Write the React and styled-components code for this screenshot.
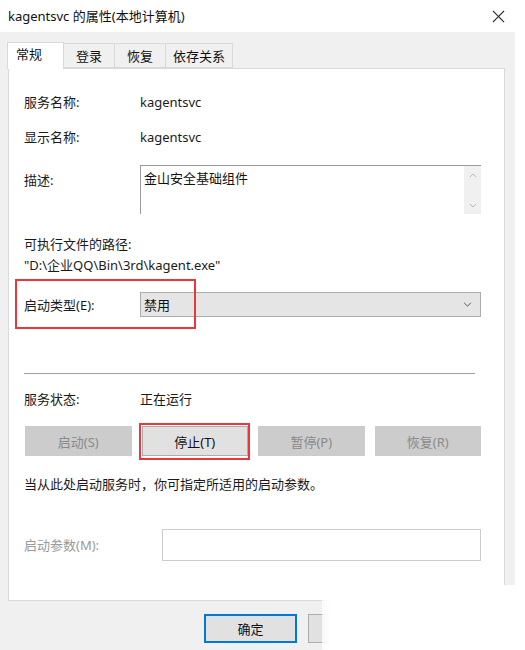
import styled, { createGlobalStyle } from "styled-components";

const GlobalStyle = createGlobalStyle`
  html, body {
    margin: 0;
    padding: 0;
    background: #ffffff;
  }
  body {
    font-family: "Noto Sans", "Noto Sans CJK SC", sans-serif;
    font-size: 13px;
    color: #1a1a1a;
  }
`;

const FONT = `"Noto Sans", "Noto Sans CJK SC", sans-serif`;

export default function App() {
  const actions = [
    { label: "启动(S)", enabled: false },
    { label: "停止(T)", enabled: true, marked: true },
    { label: "暂停(P)", enabled: false },
    { label: "恢复(R)", enabled: false },
  ];

  return (
    <Window>
      <GlobalStyle />
      <TitleBar>
        <TitleText>kagentsvc 的属性(本地计算机)</TitleText>
        <CloseIcon width="13" height="13" viewBox="0 0 14 14">
          <line x1="1" y1="1" x2="13" y2="13" />
          <line x1="13" y1="1" x2="1" y2="13" />
        </CloseIcon>
      </TitleBar>

      <Body>
        <TabRow>
          <Tab $active>常规</Tab>
          <Tab>登录</Tab>
          <Tab>恢复</Tab>
          <Tab>依存关系</Tab>
        </TabRow>

        <Panel>
          <InfoRow>
            <Label>服务名称:</Label>
            <Value>kagentsvc</Value>
          </InfoRow>
          <InfoRow $gap={15}>
            <Label>显示名称:</Label>
            <Value>kagentsvc</Value>
          </InfoRow>

          <DescRow>
            <Label $pad={5}>描述:</Label>
            <DescBox>
              <DescText>金山安全基础组件</DescText>
              <ScrollBar>
                <Arrow viewBox="0 0 10 6">
                  <polyline points="1,5 5,1 9,5" />
                </Arrow>
                <Arrow viewBox="0 0 10 6">
                  <polyline points="1,1 5,5 9,1" />
                </Arrow>
              </ScrollBar>
            </DescBox>
          </DescRow>

          <TextLine $gap={20}>可执行文件的路径:</TextLine>
          <TextLine $gap={1}>"D:\企业QQ\Bin\3rd\kagent.exe"</TextLine>

          <StartupRow>
            <MarkBox />
            <Label>启动类型(E):</Label>
            <Select>
              <span>禁用</span>
              <Chevron viewBox="0 0 10 6">
                <polyline points="1,1 5,5 9,1" />
              </Chevron>
            </Select>
          </StartupRow>

          <Separator />

          <InfoRow $gap={14}>
            <Label>服务状态:</Label>
            <Value>正在运行</Value>
          </InfoRow>

          <ButtonGrid>
            {actions.map((a) => (
              <ActionWrap key={a.label}>
                <ActionButton $enabled={a.enabled}>{a.label}</ActionButton>
                {a.marked && <ButtonMark />}
              </ActionWrap>
            ))}
          </ButtonGrid>

          <TextLine $gap={18}>当从此处启动服务时，你可指定所适用的启动参数。</TextLine>

          <ParamRow>
            <ParamLabel>启动参数(M):</ParamLabel>
            <ParamInput />
          </ParamRow>
        </Panel>

        <Footer>
          <DialogButton $primary>确定</DialogButton>
          <DialogButton>取消</DialogButton>
          <DialogButton>应用(A)</DialogButton>
        </Footer>
        <Watermark />
      </Body>
    </Window>
  );
}

const Window = styled.div`
  width: 525px;
  height: 650px;
  background: #ffffff;
  display: flex;
  flex-direction: column;
  overflow: hidden;
  font-family: ${FONT};
`;

const TitleBar = styled.div`
  height: 32px;
  display: flex;
  align-items: center;
  justify-content: space-between;
  padding: 0 20px 0 8px;
  box-sizing: border-box;
`;

const TitleText = styled.div`
  font-size: 13px;
  line-height: 18px;
  color: #111;
`;

const CloseIcon = styled.svg`
  display: block;
  width: 13px;
  height: 13px;
  flex: 0 0 13px;
  stroke: #222;
  stroke-width: 1.2;
  fill: none;
`;

const Body = styled.div`
  position: relative;
  width: 515px;
  flex: 1;
  background: #f0f0f0;
  padding: 10px 10px 0 8px;
  box-sizing: border-box;
`;

const TabRow = styled.div`
  display: flex;
  align-items: flex-end;
  height: 26px;
  margin-left: -1px;
`;

const Tab = styled.div`
  box-sizing: border-box;
  height: ${({ $active }) => ($active ? "27px" : "25px")};
  margin-bottom: ${({ $active }) => ($active ? "-1px" : "0")};
  padding: 0 ${({ $active }) => ($active ? "13px 0 8px" : "7px")};
  width: ${({ $active }) => ($active ? "57px" : "auto")};
  background: ${({ $active }) => ($active ? "#ffffff" : "#f0f0f0")};
  border: 1px solid #d9d9d9;
  border-bottom: ${({ $active }) => ($active ? "none" : "1px solid #d9d9d9")};
  margin-right: -1px;
  font-size: 13px;
  line-height: ${({ $active }) => ($active ? "22px" : "24px")};
  color: #111;
  position: relative;
  z-index: ${({ $active }) => ($active ? 2 : 1)};
  min-width: 52px;
  text-align: ${({ $active }) => ($active ? "left" : "center")};
`;

const Panel = styled.div`
  position: relative;
  z-index: 1;
  width: 497px;
  height: 533px;
  box-sizing: border-box;
  background: #ffffff;
  border: 1px solid #d9d9d9;
  padding: 23px 23px 0 15px;
  display: flex;
  flex-direction: column;
`;

const InfoRow = styled.div`
  display: flex;
  align-items: center;
  height: 20px;
  margin-top: ${({ $gap }) => $gap || 0}px;
`;

const Label = styled.div`
  width: 116px;
  flex-shrink: 0;
  line-height: 20px;
  padding-top: ${({ $pad }) => $pad || 0}px;
  font-size: 13px;
  color: #1a1a1a;
`;

const Value = styled.div`
  line-height: 20px;
  font-size: 13px;
  color: #1a1a1a;
`;

const DescRow = styled.div`
  display: flex;
  align-items: flex-start;
  margin-top: 18px;
`;

const DescBox = styled.div`
  flex: 1;
  height: 49px;
  box-sizing: border-box;
  border-top: 1px solid #9a9a9a;
  border-left: 1px solid #9a9a9a;
  display: flex;
  justify-content: space-between;
`;

const DescText = styled.div`
  padding: 3px 0 0 3px;
  line-height: 18px;
  font-size: 13px;
  color: #111;
`;

const ScrollBar = styled.div`
  width: 17px;
  background: #f0f0f0;
  display: flex;
  flex-direction: column;
  justify-content: space-between;
  align-items: center;
  padding: 7px 0 6px;
  box-sizing: border-box;
`;

const Arrow = styled.svg`
  width: 8px;
  height: 5px;
  fill: none;
  stroke: #b4b4b4;
  stroke-width: 1.2;
`;

const TextLine = styled.div`
  height: 20px;
  line-height: 20px;
  font-size: 13px;
  color: #1a1a1a;
  margin-top: ${({ $gap }) => $gap || 0}px;
  white-space: nowrap;
`;

const StartupRow = styled.div`
  position: relative;
  display: flex;
  align-items: center;
  height: 25px;
  margin-top: 17px;
`;

const MarkBox = styled.div`
  position: absolute;
  left: -9px;
  top: -13px;
  width: 181px;
  height: 50px;
  box-sizing: border-box;
  border: 2.5px solid #e8383d;
  pointer-events: none;
`;

const Select = styled.div`
  flex: 1;
  height: 25px;
  box-sizing: border-box;
  background: #e5e5e5;
  border: 1px solid #adadad;
  display: flex;
  align-items: center;
  justify-content: space-between;
  padding: 0 8px 0 3px;
  font-size: 13px;
  color: #111;
`;

const Chevron = styled.svg`
  width: 9px;
  height: 5px;
  fill: none;
  stroke: #555;
  stroke-width: 1.2;
`;

const Separator = styled.div`
  margin: 56px 6px 0 0;
  height: 1px;
  background: #a0a0a0;
  border-bottom: 1px solid #ffffff;
`;

const ButtonGrid = styled.div`
  display: grid;
  grid-template-columns: repeat(4, 1fr);
  column-gap: 10px;
  margin: 17px 0 0 1px;
`;

const ActionWrap = styled.div`
  position: relative;
`;

const ActionButton = styled.div`
  height: 30px;
  box-sizing: border-box;
  display: flex;
  align-items: center;
  justify-content: center;
  font-size: 13px;
  background: ${({ $enabled }) => ($enabled ? "#e1e1e1" : "#cccccc")};
  border: 1px solid ${({ $enabled }) => ($enabled ? "#adadad" : "#cccccc")};
  color: ${({ $enabled }) => ($enabled ? "#111" : "#8a8a8a")};
`;

const ButtonMark = styled.div`
  position: absolute;
  inset: -3px -2px -4px -3px;
  border: 2.5px solid #e8383d;
  pointer-events: none;
`;

const ParamRow = styled.div`
  display: flex;
  align-items: center;
  margin-top: 35px;
`;

const ParamLabel = styled.div`
  width: 138px;
  flex-shrink: 0;
  font-size: 13px;
  color: #9a9a9a;
  line-height: 20px;
`;

const ParamInput = styled.div`
  flex: 1;
  height: 32px;
  box-sizing: border-box;
  background: #ffffff;
  border: 1px solid #cccccc;
`;

const Footer = styled.div`
  display: flex;
  justify-content: flex-end;
  gap: 11px;
  width: 497px;
  margin-top: 13px;
`;

const DialogButton = styled.div`
  width: 93px;
  height: 29px;
  box-sizing: border-box;
  display: flex;
  align-items: center;
  justify-content: center;
  background: #e1e1e1;
  border: ${({ $primary }) => ($primary ? "2px solid #0078d7" : "1px solid #adadad")};
  font-size: 13px;
  color: #111;
`;

const Watermark = styled.div`
  position: absolute;
  left: 322px;
  right: -10px;
  top: 553px;
  bottom: 0;
  z-index: 3;
  background: linear-gradient(to right, rgba(255, 255, 255, 0.7) 0, #ffffff 8px, #ffffff 100%);
  pointer-events: none;
`;
